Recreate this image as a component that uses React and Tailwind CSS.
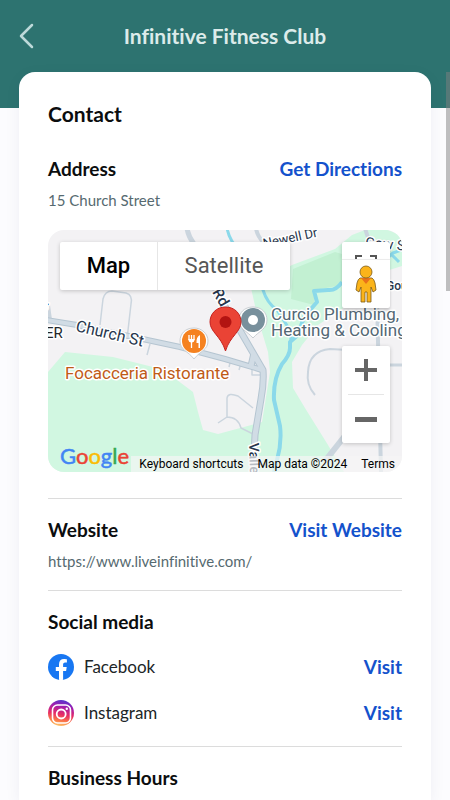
import React from "react";

const linkClass = "text-[19px] leading-6 font-bold text-[#1452cc]";
const headingClass = "text-[19px] leading-6 font-bold text-[#0b0d0e]";
const noteClass = "mt-[7px] text-[15px] leading-6 text-[#566a70]";

function MapCanvas() {
  return (
    <svg
      className="absolute inset-0 h-full w-full"
      viewBox="0 0 354 242"
      preserveAspectRatio="xMidYMid slice"
      fontFamily="Roboto, sans-serif"
      aria-hidden="true"
    >
      <rect x="-400" y="-100" width="1200" height="500" fill="#f3f2f4" />
      <g fill="#d1f7e1">
        <path d="M0 142L17 122L65 127L105 137L129 150L145 162L150 182L155 200L170 204L214 192L222 142L220 122L210 89L203 58L244 35L287 19L304 5L317 0H340L354 6V36L335 42L320 50L294 79L270 95L254 115L244 132L245 158L257 178L280 215L296 242H0Z" />
      </g>
      <path d="M245 39L287 22L294 24V55L267 60L266 75L243 69Z" fill="#c2f0d2" />
      <g fill="none" stroke="#8bd9ea" strokeWidth="4" strokeLinejoin="round">
        <path d="M179 -2Q181 10 192 22Q208 40 215 60Q219 73 229 80L242 100L243 110" strokeWidth="3" />
        <path d="M294 52Q288 61 280 60L266 61L269 72L256 87L250 105L242 112V118Q242 125 234 134Q225 149 226 170Q229 183 232 196Q234 213 229 230L226 242" />
        <path d="M337 30L345 23L356 19M343 24L351 32" strokeWidth="3" />
      </g>
      <g fill="none" stroke="#cbd5de" strokeLinejoin="round">
        <path d="M52 95L55 69Q57 61 64 61L78 63Q85 65 83 74L79 109" strokeWidth="1.5" />
        <path d="M102 114L99 125M183 129L181 137M193 133L191 140M204 139V145H214" strokeWidth="1.5" />
        <path d="M205 178L190 166Q180 162 179 168V187L170 193M179 187Q190 187 193 198L205 204" strokeWidth="1.5" />
        <path d="M0 75L2 90" strokeWidth="4" />
        <path d="M139 -2Q140 6 146 14L168 62" strokeWidth="5" />
        <path d="M208 -2Q209 6 216 13" strokeWidth="4" />
        <path d="M317 -2Q320 10 328 24L333 242" strokeWidth="4" />
        <path d="M267 165Q258 155 260 142Q261 121 282 119L300 120" strokeWidth="2" />
        <path d="M277 231L300 202" strokeWidth="6" />
        <path d="M340 135H356" strokeWidth="3" />
      </g>
      <g fill="none" stroke="#b5c5d1" strokeWidth="7" strokeLinejoin="round">
        <path d="M-2 90L29 95L132 117L177 129L214 140" strokeWidth="6" />
        <path d="M168 62L190 97L215 140Q216 153 213 169L207 205L205 244M206 123L203 136" />
      </g>
      <g fill="none" stroke="#d1dce5" strokeWidth="5" strokeLinejoin="round">
        <path d="M-2 90L29 95L132 117L177 129L214 140" strokeWidth="4" />
        <path d="M168 62L190 97L215 140Q216 153 213 169L207 205L205 244M206 123L203 136" />
      </g>
      <g stroke="#ffffff" strokeWidth="3" strokeLinejoin="round" paintOrder="stroke" fill="#27364d" fontWeight="500">
        <text x="27" y="101" fontSize="16" transform="rotate(13 27 101)" fontWeight="400">Church St</text>
        <text x="164" y="62" fontSize="15" transform="rotate(60 164 62)">Rd</text>
        <text x="216" y="18" fontSize="13" transform="rotate(-12 216 18)" fontWeight="400">Newell Dr</text>
        <text x="317" y="17" fontSize="14" transform="rotate(5 317 17)" fontWeight="400">Gow St</text>
        <text x="338" y="60" fontSize="12">Gould</text>
        <text x="201" y="213" fontSize="14" transform="rotate(88 201 213)">Valley Rd</text>
        <text x="-1" y="80" fontSize="13" transform="rotate(-75 -1 80)">k</text>
        <text x="-3" y="108" fontSize="15" fontWeight="400" fill="#24282c">ER</text>
        <text x="17" y="149" fontSize="17" fontWeight="400" fill="#bf5b17">Focacceria Ristorante</text>
        <g fontSize="17" fontWeight="400" fill="#536774">
          <text x="223" y="90">Curcio Plumbing,</text>
          <text x="223" y="106">Heating &amp; Cooling</text>
        </g>
      </g>
      <path d="M146 98C137 98 132 104 132 111C132 120 140 121 146 129C152 121 160 120 160 111C160 104 154 98 146 98Z" fill="#fff" stroke="#c9ced2" />
      <circle cx="146" cy="111" r="12" fill="#f58220" />
      <path d="M141 105V110M143.500 105V118M146 105V110" fill="none" stroke="#fff" strokeWidth="1.300" />
      <path d="M140.400 109H146.600Q146.600 112.500 143.500 112.500Q140.400 112.500 140.400 109ZM152 105V118H150.500V113H148.500Q148 107 152 105Z" fill="#fff" />
      <path d="M205 77C196 77 191 83 191 90C191 99 199 101 205 108C211 101 219 99 219 90C219 83 214 77 205 77Z" fill="#fff" stroke="#c9ced2" />
      <circle cx="205" cy="90" r="12" fill="#78909c" />
      <circle cx="205" cy="90" r="5" fill="#fff" />
      <path d="M177.500 77C168 77 162 84 162 92C162 102 173 106 177.500 121C182 106 193 102 193 92C193 84 187 77 177.500 77Z" fill="#ea4335" stroke="#c5221f" />
      <circle cx="177.500" cy="92" r="6" fill="#b31412" />
    </svg>
  );
}

function MapPanel() {
  return (
    <section
      aria-label="Map"
      className="relative mt-[18px] flex h-[242px] flex-col justify-between overflow-hidden rounded-2xl font-[Roboto,sans-serif]"
    >
      <MapCanvas />
      <div className="relative flex items-start justify-between p-3">
        <div className="flex h-12 rounded-xs bg-white text-[22px] leading-6 shadow-[0_1px_4px_rgba(0,0,0,0.2)]">
          <button type="button" className="w-[98px] border-r border-[#e6e6e6] font-medium text-black">Map</button>
          <button type="button" className="w-[132px] text-[#565656]">Satellite</button>
        </div>
        <div className="flex w-12 flex-col">
          <button type="button" aria-label="Full screen" className="flex h-[17px] items-end justify-center rounded-t-xs bg-white shadow-[0_1px_4px_rgba(0,0,0,0.2)]">
            <svg className="block" width="22" height="4" viewBox="0 0 22 4" fill="none" stroke="#555" strokeWidth="2">
              <path d="M1 4V1H7M15 1H21V4" />
            </svg>
          </button>
          <button type="button" aria-label="Street View" className="flex h-[49px] items-center justify-center rounded-b-xs border-t border-[#ececec] bg-white shadow-[0_2px_3px_rgba(0,0,0,0.2)]">
            <svg width="22" height="38" viewBox="0 0 22 38" fill="#fbb41a" stroke="#7c5a17" strokeWidth="0.8">
              <path d="M5 13H17Q19 14 20 18L21 25L18 27L16 22V37H12V27H10V37H6V22L4 27L1 25L2 18Q3 14 5 13Z" />
              <path d="M6 13L11 19L16 13Z" fill="#e8711a" stroke="none" />
              <circle cx="11" cy="7" r="6" />
            </svg>
          </button>
          <div className="mt-[38px] flex h-[97px] flex-col items-center rounded-xs bg-white shadow-[0_1px_4px_rgba(0,0,0,0.2)]">
            <button type="button" aria-label="Zoom in" className="flex w-9 flex-1 items-center justify-center border-b border-[#e6e6e6]">
              <svg width="22" height="22" viewBox="0 0 22 22" fill="#666"><path d="M9 0H13V9H22V13H13V22H9V13H0V9H9Z" /></svg>
            </button>
            <button type="button" aria-label="Zoom out" className="flex w-9 flex-1 items-center justify-center">
              <svg width="22" height="22" viewBox="0 0 22 22" fill="#666"><path d="M0 9H22V14H0Z" /></svg>
            </button>
          </div>
        </div>
      </div>
      <div className="absolute inset-x-0 bottom-0 flex items-end justify-between pl-3">
        <a href="#google" aria-label="Google" className="font-[Lato,sans-serif] text-[22px] leading-8 font-normal [-webkit-text-stroke:0.5px_currentColor]">
          <span className="text-[#4285f4]">G</span><span className="text-[#ea4335]">o</span><span className="text-[#fbbc05]">o</span><span className="text-[#4285f4]">g</span><span className="text-[#34a853]">l</span><span className="text-[#ea4335]">e</span>
        </a>
        <div className="flex h-4 items-center gap-3.5 bg-[#f5f5f5]/70 pr-[7px] pl-2 text-[12px] leading-4 whitespace-nowrap text-black">
          <button type="button">Keyboard shortcuts</button>
          <span>Map data ©2024</span>
          <a href="#terms">Terms</a>
        </div>
      </div>
    </section>
  );
}

function FacebookIcon() {
  return (
    <svg width="26" height="26" viewBox="0 0 26 26" aria-hidden="true">
      <circle cx="13" cy="13" r="13" fill="#1877f2" />
      <path d="M11 25.800V17H7.800V13H11V10.200C11 6.900 13 5 16 5C17.400 5 18.900 5.300 18.900 5.300V8.600H17.200C15.600 8.600 15.100 9.600 15.100 10.600V13H18.700L18.100 17H15.100V25.800Q13 26.200 11 25.800Z" fill="#fff" />
    </svg>
  );
}

function InstagramIcon() {
  return (
    <svg width="26" height="26" viewBox="0 0 26 26" fill="none" aria-hidden="true">
      <defs>
        <linearGradient id="insta" x1="0.600" y1="0" x2="0.400" y2="1">
          <stop offset="0" stopColor="#5136cf" />
          <stop offset="0.250" stopColor="#a11cae" />
          <stop offset="0.550" stopColor="#e72d65" />
          <stop offset="0.800" stopColor="#fb7b48" />
          <stop offset="1" stopColor="#fdc66b" />
        </linearGradient>
      </defs>
      <circle cx="13" cy="13" r="13" fill="url(#insta)" />
      <rect x="4.500" y="5" width="18" height="18" rx="5" stroke="#fff" strokeWidth="1.600" />
      <circle cx="13.200" cy="14" r="4.500" stroke="#fff" strokeWidth="1.800" />
      <circle cx="18.800" cy="8.700" r="1.200" fill="#fff" />
    </svg>
  );
}

function SocialRow({ icon, name, href }) {
  return (
    <li className="flex h-[26px] items-center justify-between">
      <span className="flex items-center gap-2.5 text-[17px] leading-6 text-[#202527]">
        {icon}
        {name}
      </span>
      <a href={href} aria-label={"Visit " + name} className={linkClass}>Visit</a>
    </li>
  );
}

export default function App() {
  return (
    <div className="relative flex min-h-screen flex-col bg-[#fcfcfe] font-[Lato,sans-serif] [font-variant-ligatures:none]">
      <header className="grid h-[108px] grid-cols-[1fr_auto_1fr] items-start bg-[#2d7370] px-[19px] pt-[22px]">
        <button type="button" aria-label="Back" className="flex h-7 w-8 items-center">
          <svg width="15" height="26" viewBox="0 0 15 26" fill="none" stroke="#bddada" strokeWidth="2.5" strokeLinecap="round" strokeLinejoin="round">
            <path d="M13 2L2 13L13 24" />
          </svg>
        </button>
        <h1 className="text-[21px] leading-7 font-bold text-[#dcebea]">Infinitive Fitness Club</h1>
      </header>
      <main className="relative mx-[19px] -mt-9 flex-1 rounded-t-2xl bg-white px-[29px] pt-7 shadow-[0_4px_16px_rgba(40,40,80,0.06)]">
        <h2 className="text-[21px] leading-7 font-bold text-[#0b0d0e]">Contact</h2>
        <section className="mt-[29px] border-b border-[#dcdcdc] pb-[26px]">
          <div className="flex items-center justify-between">
            <h3 className={headingClass}>Address</h3>
            <a href="#directions" className={linkClass}>Get Directions</a>
          </div>
          <p className={noteClass}>15 Church Street</p>
          <MapPanel />
        </section>
        <section className="border-b border-[#dcdcdc] pt-[19px] pb-[17px]">
          <div className="flex items-center justify-between">
            <h3 className={headingClass}>Website</h3>
            <a href="https://www.liveinfinitive.com/" className={linkClass}>Visit Website</a>
          </div>
          <p className={noteClass}>https://www.liveinfinitive.com/</p>
        </section>
        <section className="border-b border-[#dcdcdc] pt-[19px] pb-5">
          <h3 className={headingClass}>Social media</h3>
          <ul className="mt-5 flex flex-col gap-5">
            <SocialRow icon={<FacebookIcon />} name="Facebook" href="#facebook" />
            <SocialRow icon={<InstagramIcon />} name="Instagram" href="#instagram" />
          </ul>
        </section>
        <section className="pt-[19px]">
          <h3 className={headingClass}>Business Hours</h3>
        </section>
      </main>
      <div className="absolute top-[72px] right-0 h-[219px] w-1 bg-[#808080]/50" aria-hidden="true" />
    </div>
  );
}
